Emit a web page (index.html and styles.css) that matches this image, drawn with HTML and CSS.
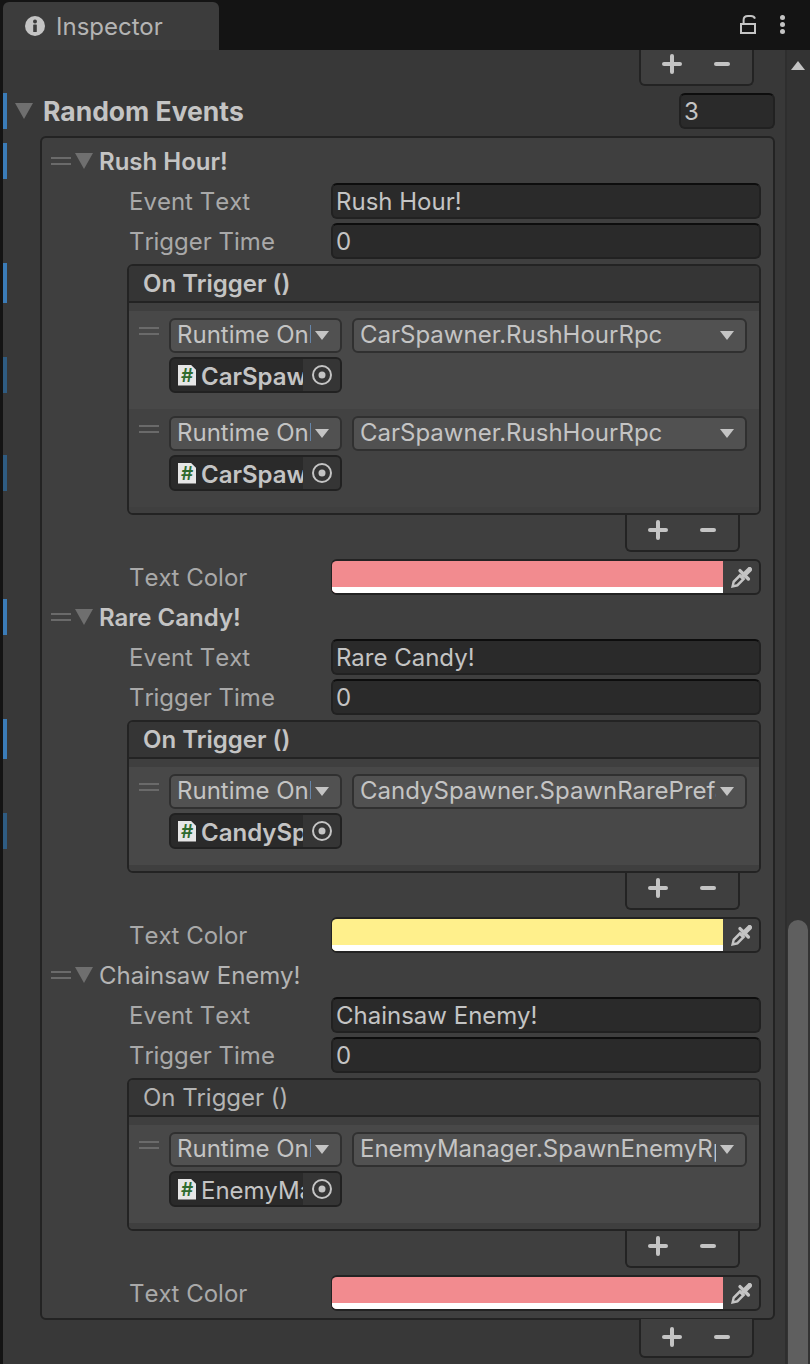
FILE: index.html
```html
<!DOCTYPE html>
<html lang="en">
<head>
  <meta charset="UTF-8" />
  <title>Inspector</title>
  <link rel="stylesheet" href="styles.css">
</head>
<body>
  <svg class="defs" width="0" height="0">
    <symbol id="eyedropper" viewBox="0 0 21 21">
      <path d="M0 21 L1.6 14 L9 6.6 L14.4 12 L7 19.4 Z M3.8 15.4 L3.2 17.8 L5.6 17.2 L10.6 12.2 L8.8 10.4 Z" fill="#c4c4c4" fill-rule="evenodd"/>
      <path d="M9 3.6 L17.4 12" fill="none" stroke="#c4c4c4" stroke-width="3.4" stroke-linecap="round"/>
      <path d="M13 8 L18.6 2.4" fill="none" stroke="#c4c4c4" stroke-width="5" stroke-linecap="round"/>
    </symbol>
    <symbol id="target" viewBox="0 0 20 20">
      <circle cx="10" cy="10" r="9" fill="none" stroke="#c4c4c4" stroke-width="2"/>
      <circle cx="10" cy="10" r="3.5" fill="#c4c4c4"/>
    </symbol>
  </svg>

  <div class="window">
    <div class="tabbar">
      <div class="tab">
        <svg class="info-icon" width="20" height="20" viewBox="0 0 20 20">
          <circle cx="10" cy="10" r="10" fill="#c4c4c4"/>
          <rect x="8.2" y="8.4" width="3.6" height="7.6" rx="0.6" fill="#3c3c3c"/>
          <circle cx="10" cy="5.4" r="2" fill="#3c3c3c"/>
        </svg>
        <span>Inspector</span>
      </div>
      <div class="tab-actions">
        <svg width="16" height="19" viewBox="0 0 16 19">
          <rect x="1" y="9" width="14" height="9" fill="none" stroke="#c4c4c4" stroke-width="2"/>
          <path d="M3.6 8 V5 Q3.6 1 8 1 H11 Q14 1 15 3.6" fill="none" stroke="#c4c4c4" stroke-width="2"/>
        </svg>
        <div class="dots"><i></i><i></i><i></i></div>
      </div>
    </div>

    <div class="panel">
      <div class="content">
        <div class="footer footer-top">
          <span class="plus"></span><span class="minus"></span>
        </div>

        <div class="array-head mod">
          <span class="arrow big"></span>
          <span class="array-title">Random Events</span>
          <div class="field size-field">3</div>
        </div>

        <div class="list">
          <div class="element">
            <div class="el-head mod">
              <span class="grip"></span><span class="arrow"></span>
              <span class="el-title">Rush Hour!</span>
            </div>
            <div class="prop"><label>Event Text</label><div class="field">Rush Hour!</div></div>
            <div class="prop"><label>Trigger Time</label><div class="field">0</div></div>
            <div class="event-box">
              <div class="event-head mod strong">On Trigger ()</div>
              <div class="event-body">
                <div class="call active">
                  <span class="grip small"></span>
                  <div class="call-grid">
                    <div class="select"><span class="clip">Runtime Only</span><span class="caret"></span></div>
                    <div class="select"><span class="clip">CarSpawner.RushHourRpc</span><span class="caret"></span></div>
                    <div class="object mod dim strong">
                      <span class="script">#</span><span class="clip">CarSpawner</span>
                      <span class="picker"><svg width="20" height="20"><use href="#target"/></svg></span>
                    </div>
                  </div>
                </div>
                <div class="call">
                  <span class="grip small"></span>
                  <div class="call-grid">
                    <div class="select"><span class="clip">Runtime Only</span><span class="caret"></span></div>
                    <div class="select"><span class="clip">CarSpawner.RushHourRpc</span><span class="caret"></span></div>
                    <div class="object mod dim strong">
                      <span class="script">#</span><span class="clip">CarSpawner</span>
                      <span class="picker"><svg width="20" height="20"><use href="#target"/></svg></span>
                    </div>
                  </div>
                </div>
              </div>
            </div>
            <div class="footer footer-inner"><span class="plus"></span><span class="minus"></span></div>
            <div class="prop color-prop">
              <label>Text Color</label>
              <div class="color-field">
                <div class="swatch pink"></div>
                <span class="dropper"><svg width="21" height="21"><use href="#eyedropper"/></svg></span>
              </div>
            </div>
          </div>

          <div class="element">
            <div class="el-head mod">
              <span class="grip"></span><span class="arrow"></span>
              <span class="el-title">Rare Candy!</span>
            </div>
            <div class="prop"><label>Event Text</label><div class="field">Rare Candy!</div></div>
            <div class="prop"><label>Trigger Time</label><div class="field">0</div></div>
            <div class="event-box">
              <div class="event-head mod strong">On Trigger ()</div>
              <div class="event-body">
                <div class="call active">
                  <span class="grip small"></span>
                  <div class="call-grid">
                    <div class="select"><span class="clip">Runtime Only</span><span class="caret"></span></div>
                    <div class="select"><span class="clip">CandySpawner.SpawnRarePrefab</span><span class="caret"></span></div>
                    <div class="object mod dim strong">
                      <span class="script">#</span><span class="clip">CandySpawner</span>
                      <span class="picker"><svg width="20" height="20"><use href="#target"/></svg></span>
                    </div>
                  </div>
                </div>
              </div>
            </div>
            <div class="footer footer-inner"><span class="plus"></span><span class="minus"></span></div>
            <div class="prop color-prop">
              <label>Text Color</label>
              <div class="color-field">
                <div class="swatch yellow"></div>
                <span class="dropper"><svg width="21" height="21"><use href="#eyedropper"/></svg></span>
              </div>
            </div>
          </div>

          <div class="element">
            <div class="el-head">
              <span class="grip"></span><span class="arrow"></span>
              <span class="el-title plain">Chainsaw Enemy!</span>
            </div>
            <div class="prop"><label>Event Text</label><div class="field">Chainsaw Enemy!</div></div>
            <div class="prop"><label>Trigger Time</label><div class="field">0</div></div>
            <div class="event-box">
              <div class="event-head">On Trigger ()</div>
              <div class="event-body">
                <div class="call active">
                  <span class="grip small"></span>
                  <div class="call-grid">
                    <div class="select"><span class="clip">Runtime Only</span><span class="caret"></span></div>
                    <div class="select"><span class="clip">EnemyManager.SpawnEnemyRpc</span><span class="caret"></span></div>
                    <div class="object">
                      <span class="script">#</span><span class="clip">EnemyManager</span>
                      <span class="picker"><svg width="20" height="20"><use href="#target"/></svg></span>
                    </div>
                  </div>
                </div>
              </div>
            </div>
            <div class="footer footer-inner"><span class="plus"></span><span class="minus"></span></div>
            <div class="prop color-prop">
              <label>Text Color</label>
              <div class="color-field">
                <div class="swatch pink"></div>
                <span class="dropper"><svg width="21" height="21"><use href="#eyedropper"/></svg></span>
              </div>
            </div>
          </div>
        </div>

        <div class="footer footer-bottom"><span class="plus"></span><span class="minus"></span></div>
      </div>

      <div class="scrollbar">
        <span class="scroll-up"></span>
        <div class="scroll-thumb"></div>
      </div>
    </div>
  </div>
</body>
</html>
```

FILE: styles.css
```css
* {
  box-sizing: border-box;
}

body {
  margin: 0;
  background: #141414;
  font-family: 'Inter', 'Liberation Sans', sans-serif;
  font-size: 24px;
  color: #a9a9a9;
}

.defs {
  position: absolute;
}

.window {
  width: 810px;
  height: 1364px;
  padding-left: 3px;
  overflow: hidden;
  display: flex;
  flex-direction: column;
}

/* tab strip */
.tabbar {
  height: 50px;
  padding-top: 2px;
  display: flex;
  justify-content: space-between;
  flex-shrink: 0;
}

.tab {
  width: 216px;
  background: #3c3c3c;
  border-radius: 6px 6px 0 0;
  display: flex;
  align-items: center;
  gap: 11px;
  padding-left: 22px;
  color: #b4b4b4;
}

.tab-actions {
  display: flex;
  align-items: center;
  gap: 24px;
  padding: 0 25px 4px 0;
}

.dots {
  display: flex;
  flex-direction: column;
  gap: 2px;
}

.dots i {
  width: 5px;
  height: 5px;
  border-radius: 50%;
  background: #c4c4c4;
}

/* main panel */
.panel {
  flex: 1;
  display: flex;
  background: #383838;
  min-height: 0;
}

.content {
  width: 782px;
  padding: 0 10px 0 37px;
  flex-shrink: 0;
}

.footer {
  width: 115px;
  height: 37px;
  background: #3f3f3f;
  border: 2px solid #232323;
  border-top: 0;
  border-radius: 0 0 6px 6px;
  display: flex;
  align-items: center;
  justify-content: center;
  gap: 32px;
  padding: 0 2px 5px 0;
}

.footer-top {
  margin: 0 21px 7px auto;
  height: 36px;
  padding-bottom: 6px;
}

.footer-bottom {
  margin: -1px 21px 0 auto;
  height: 39px;
  padding-bottom: 2px;
}

.footer-inner {
  margin: 0 21px 7px auto;
}

.plus, .minus {
  display: block;
  position: relative;
  width: 20px;
  height: 4px;
  border-radius: 2px;
  background: #c4c4c4;
}

.minus {
  width: 16px;
}

.plus::after {
  content: "";
  position: absolute;
  left: 8px;
  top: -8px;
  width: 4px;
  height: 20px;
  border-radius: 2px;
  background: #c4c4c4;
}

/* blue prefab override markers */
.mod::before {
  content: "";
  position: absolute;
  left: 3px;
  width: 4px;
  height: 36px;
  background: #3b7cb8;
}

.mod.dim::before {
  background: #2f5c82;
}

.event-head.mod::before {
  height: 40px;
  margin-top: -3px;
}

.array-head {
  height: 36px;
  margin-left: -25px;
  display: flex;
  align-items: center;
  margin-bottom: 7px;
}

.array-title {
  flex: 1;
  margin-left: 10px;
  font-size: 26.5px;
  font-weight: 700;
  color: #c4c4c4;
}

.arrow {
  width: 0;
  height: 0;
  border-left: 9px solid transparent;
  border-right: 9px solid transparent;
  border-top: 16px solid #6f6f6f;
  flex-shrink: 0;
}

.size-field {
  flex: none !important;
  width: 96px;
}

.list {
  border: 2px solid #232323;
  border-radius: 6px;
  background: #3f3f3f;
  padding: 5px 12px 7px 8px;
}

.element + .element {
  margin-top: 4px;
}

.el-head {
  height: 36px;
  display: flex;
  align-items: center;
}

.el-title {
  margin-left: 6px;
  font-weight: 600;
  color: #c4c4c4;
}

.el-title.plain {
  font-weight: 400;
  color: #b4b4b4;
}

.grip {
  width: 20px;
  height: 8px;
  border-top: 2px solid #6a6a6a;
  border-bottom: 2px solid #6a6a6a;
  margin: 0 4px 0 1px;
  flex-shrink: 0;
}

.prop {
  height: 36px;
  margin-top: 4px;
  padding-left: 79px;
  display: flex;
  align-items: center;
}

.prop label {
  width: 202px;
  flex-shrink: 0;
  font-kerning: none;
}

.field {
  flex: 1;
  height: 36px;
  background: #2a2a2a;
  border: 2px solid #212121;
  border-top-color: #0d0d0d;
  border-radius: 6px;
  padding: 0 3px;
  line-height: 33px;
  color: #c4c4c4;
}

/* event drawer */
.event-box {
  margin: 5px 0 0 77px;
  border: 2px solid #232323;
  border-radius: 6px;
  background: #3f3f3f;
  overflow: hidden;
}

.event-head {
  height: 37px;
  background: #353535;
  border-bottom: 2px solid #232323;
  padding-left: 14px;
  line-height: 36px;
  color: #b4b4b4;
}

.event-head.strong {
  font-weight: 600;
  color: #c4c4c4;
}

.event-body {
  padding: 8px 0 6px;
  background: #3f3f3f;
}

.call {
  height: 98px;
  background: #424242;
  padding: 7px 12px 0 10px;
  display: flex;
}

.call.active {
  background: #484848;
}

.grip.small {
  margin: 9px 0 0;
}

.call-grid {
  margin-left: 10px;
  flex: 1;
  min-width: 0;
  display: grid;
  grid-template-columns: 173px minmax(0, 1fr);
  grid-template-rows: 35px 36px;
  column-gap: 10px;
  row-gap: 4px;
}

.select {
  background: #515151;
  border: 2px solid #303030;
  border-radius: 6px;
  height: 35px;
  display: flex;
  align-items: center;
  padding: 0 11px 2px 6px;
  color: #c4c4c4;
  min-width: 0;
}

.clip {
  flex: 1;
  overflow: hidden;
  white-space: nowrap;
  min-width: 0;
}

.object .clip {
  padding-top: 2px;
}

.caret {
  width: 0;
  height: 0;
  border-left: 7.5px solid transparent;
  border-right: 7.5px solid transparent;
  border-top: 9px solid #c4c4c4;
  margin: 2px 0 0 4px;
  flex-shrink: 0;
}

.object {
  height: 36px;
  background: #2a2a2a;
  border: 2px solid #212121;
  border-radius: 6px;
  display: flex;
  align-items: center;
  padding-left: 7px;
  color: #c4c4c4;
  overflow: hidden;
}

.object.strong {
  font-weight: 600;
}

.script {
  width: 18px;
  height: 21px;
  margin-right: 5px;
  background: #e6e6e6;
  clip-path: polygon(0 0, 70% 0, 100% 25%, 100% 100%, 0 100%);
  color: #2f6b2f;
  font-size: 19px;
  font-weight: 600;
  line-height: 22px;
  text-align: center;
  flex-shrink: 0;
}

.picker {
  width: 37px;
  align-self: stretch;
  background: #353535;
  display: flex;
  align-items: center;
  justify-content: center;
  flex-shrink: 0;
}

.color-prop {
  margin-top: 0;
}

.color-field {
  flex: 1;
  height: 36px;
  border: 2px solid #232323;
  border-left-width: 1px;
  border-radius: 6px;
  background: #3f3f3f;
  display: flex;
  overflow: hidden;
}

.swatch {
  flex: 1;
  border-bottom: 6px solid #fff;
}

.pink {
  background: #f28b8f;
}

.yellow {
  background: #fff08c;
}

.dropper {
  width: 36px;
  display: flex;
  align-items: center;
  justify-content: center;
  flex-shrink: 0;
}

/* scrollbar */
.scrollbar {
  flex: 1;
  background: #333;
  border-left: 2px solid #2e2e2e;
  padding: 11px 1px 0 0;
  display: flex;
  flex-direction: column;
  align-items: center;
}

.scroll-up {
  width: 0;
  height: 0;
  border-left: 7px solid transparent;
  border-right: 7px solid transparent;
  border-bottom: 9px solid #c4c4c4;
}

.scroll-thumb {
  width: 20px;
  margin-top: 850px;
  flex: 1;
  background: #5f5f5f;
  border-radius: 10px 10px 0 0;
}
```
